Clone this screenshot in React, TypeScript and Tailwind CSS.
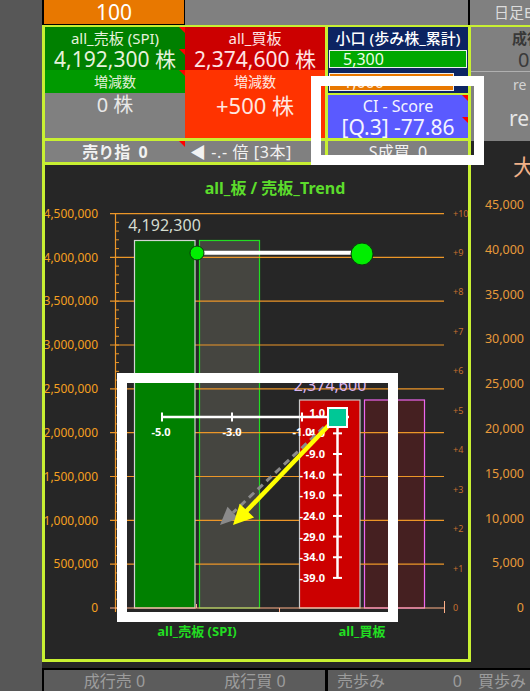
import React from "react";

const leftLabels = ["0", "500,000", "1,000,000", "1,500,000", "2,000,000", "2,500,000", "3,000,000", "3,500,000", "4,000,000", "4,500,000"];
const rightLabels = ["0", "+1", "+2", "+3", "+4", "+5", "+6", "+7", "+8", "+9", "+10"];
const vLabels = ["1.0", "-4.0", "-9.0", "-14.0", "-19.0", "-24.0", "-29.0", "-34.0", "-39.0"];
const sideLabels = ["0", "5,000", "10,000", "15,000", "20,000", "25,000", "30,000", "35,000", "40,000", "45,000"];

function Chart() {
  const minor = Array.from({ length: 46 }, (_, j) => 608 - j * 8.766);
  return (
    <svg width="423" height="494" viewBox="45 165 423 494" className="block">
      <text x="275" y="194" textAnchor="middle" fontSize="16" fontWeight="700" fill="#5cdc2c">
        all_板 / 売板_Trend
      </text>
      <rect x="199.5" y="240.5" width="60" height="367.5" fill="#454540" stroke="#22dd22" strokeWidth="1.2" />
      <rect x="364.5" y="400" width="60" height="208" fill="#452021" stroke="#ee66ee" strokeWidth="1.2" />
      {leftLabels.map((l, i) => {
        const y = 608 - i * 43.83;
        return (
          <g key={l}>
            {i > 0 && <line x1="110" y1={y} x2="444" y2={y} stroke="#ec9628" strokeWidth="1.2" />}
            <text x="98" y={y + 4.2} textAnchor="end" fontSize="12" fill="#f5a020">
              {l}
            </text>
          </g>
        );
      })}
      {minor.map((y, j) => (
        <line key={j} x1="115" y1={y} x2="119" y2={y} stroke="#ec9628" strokeWidth="1" />
      ))}
      <line x1="115.5" y1="213" x2="115.5" y2="612" stroke="#ec9628" strokeWidth="1.2" />
      {rightLabels.map((l, k) => (
        <text key={l} x="453" y={608 - k * 39.45 + 3} fontSize="9" fill="#c8702f">
          {l}
        </text>
      ))}
      <rect x="134.5" y="240.5" width="60.5" height="367.5" fill="#008000" stroke="#d4d4d4" strokeWidth="1.2" />
      <rect x="299.5" y="400" width="60.5" height="208" fill="#cc0000" stroke="#c8c8c8" strokeWidth="1.2" />
      <line x1="110" y1="608" x2="445" y2="608" stroke="#ffb088" strokeWidth="1.2" />
      <line x1="444.5" y1="601" x2="444.5" y2="613" stroke="#ffb088" strokeWidth="1" />
      <line x1="279.5" y1="608" x2="279.5" y2="613" stroke="#ffb088" strokeWidth="1" />
      <line x1="196.5" y1="604" x2="196.5" y2="608" stroke="#ffb088" strokeWidth="1" />
      <text x="164.5" y="231" textAnchor="middle" fontSize="16" fill="#d4dcd0">4,192,300</text>
      <text x="330" y="391" textAnchor="middle" fontSize="16" fill="#dab4f0">2,374,600</text>
      <text x="197" y="636" textAnchor="middle" fontSize="13" fontWeight="700" fill="#22dd22">all_売板 (SPI)</text>
      <text x="362" y="636" textAnchor="middle" fontSize="13" fontWeight="700" fill="#22dd22">all_買板</text>
      <line x1="197" y1="252.7" x2="362" y2="252.7" stroke="#ffffff" strokeWidth="4" />
      <circle cx="197" cy="253" r="7" fill="#00ee00" stroke="#0a3a0a" strokeWidth="1" />
      <circle cx="362" cy="254" r="11" fill="#00ee00" stroke="#0a3a0a" strokeWidth="1" />
      <line x1="162" y1="417" x2="349" y2="417" stroke="#ffffff" strokeWidth="2.5" />
      {[162, 232, 302].map((x) => (
        <line key={x} x1={x} y1="412.5" x2={x} y2="421.5" stroke="#ffffff" strokeWidth="2" />
      ))}
      {[["-5.0", 161], ["-3.0", 232], ["-1.0", 302]].map(([t, x]) => (
        <text key={t as string} x={x as number} y="436" textAnchor="middle" fontSize="11" fontWeight="700" fill="#ffffff">
          {t}
        </text>
      ))}
      <line x1="337.5" y1="417" x2="337.5" y2="578" stroke="#ffffff" strokeWidth="2.5" />
      {vLabels.map((t, i) => {
        const y = 412.7 + i * 20.65;
        return (
          <g key={t}>
            <line x1="333" y1={y} x2="342" y2={y} stroke="#ffffff" strokeWidth="2" />
            <text x="325" y={y + 4} textAnchor="end" fontSize="11" fontWeight="700" fill="#ffffff">
              {t}
            </text>
          </g>
        );
      })}
      <line x1="324" y1="427" x2="233" y2="512.6" stroke="#8a8a8a" strokeWidth="3" strokeDasharray="7 5" />
      <polygon points="220,525 238.5,518.4 227.5,506.8" fill="#8a8a8a" />
      <line x1="330" y1="424" x2="246" y2="511.5" stroke="#ffff00" strokeWidth="4.5" />
      <polygon points="233,525 254.1,517.5 239.7,503.7" fill="#ffff00" />
      <rect x="328" y="408" width="19" height="19" fill="#00c896" stroke="#ffffff" strokeWidth="2" />
    </svg>
  );
}

function SideAxis() {
  return (
    <svg width="59" height="521" viewBox="471 141 59 521" className="block">
      <text x="513" y="175" fontSize="22" fill="#f0b088">大</text>
      {sideLabels.map((l, k) => (
        <text key={l} x="524" y={608 - k * 44.8 + 4.2} textAnchor="end" fontSize="12.5" fill="#e89a3a">
          {l}
        </text>
      ))}
    </svg>
  );
}

export default function App() {
  return (
    <div className="relative w-[530px] h-[691px] overflow-hidden bg-[#575757] font-['Noto_Sans','Noto_Sans_CJK_JP',sans-serif] flex">
      <div className="w-[42px] shrink-0" />
      <div className="flex flex-col w-[488px] shrink-0">
        <div className="h-[25px] flex shrink-0">
          <div className="w-[143px] bg-[#e87800] border-l-2 border-r border-b border-black flex items-center justify-center text-white text-[21px] leading-none">
            100
          </div>
          <div className="w-[283px] bg-[#808080]" />
          <div className="w-[2px] bg-black" />
          <div className="w-[60px] bg-[#808080] flex items-center pl-[24px] text-[15px] leading-none text-[#dcdcdc] whitespace-nowrap overflow-hidden">
            日足E
          </div>
        </div>
        <div className="h-[637px] flex shrink-0">
          <div className="w-[429px] flex flex-col border-l-[3px] border-r-[3px] border-t-2 border-b-[3px] border-[#c8f032]">
            <div className="h-[111px] flex">
              <div className="w-[140px] flex flex-col">
                <div className="h-[43px] bg-[#008000] flex flex-col items-center pt-[1px] text-[#e6f2dc]">
                  <div className="h-[20px] leading-[20px] text-[15px]">all_売板 (SPI)</div>
                  <div className="h-[22px] leading-[22px] text-[21px]">4,192,300 株</div>
                </div>
                <div className="h-[23px] bg-[#009a00] flex items-center justify-center text-[14px] text-[#e0f0d8] leading-none">
                  増減数
                </div>
                <div className="h-[45px] bg-[#808080] flex justify-center">
                  <div className="h-[24px] leading-[24px] text-[20px] text-[#e8e8e8]">0 株</div>
                </div>
              </div>
              <div className="w-[140px] flex flex-col">
                <div className="h-[43px] bg-[#cc0000] flex flex-col items-center pt-[1px] text-[#ffe4e4]">
                  <div className="h-[20px] leading-[20px] text-[15px]">all_買板</div>
                  <div className="h-[22px] leading-[22px] text-[21px]">2,374,600 株</div>
                </div>
                <div className="h-[68px] bg-[#ff3300] flex flex-col items-center text-[#ffe8e0]">
                  <div className="h-[23px] leading-[23px] text-[14px]">増減数</div>
                  <div className="h-[24px] leading-[24px] text-[22px]">+500 株</div>
                </div>
              </div>
              <div className="w-[3px] bg-[#c8f032]" />
              <div className="w-[140px] flex flex-col">
                <div className="h-[66px] bg-[#0c2462] flex flex-col">
                  <div className="h-[22px] leading-[22px] text-center text-[15px] font-medium text-white whitespace-nowrap">
                    小口 (歩み株_累計)
                  </div>
                  <div className="mt-[1px] ml-[1px] w-[138px] h-[18px] bg-[#00a800] border border-[#eeeeee] pl-[13px] text-[16px] leading-[16px] text-[#eaffe6]">
                    5,300
                  </div>
                  <div className="mt-[5px] ml-[1px] w-[125px] h-[18px] bg-[#e87800] border border-[#eeeeee] pl-[13px] text-[16px] leading-[16px] text-[#fff0e0]">
                    1,000
                  </div>
                </div>
                <div className="h-[2px] bg-[#c8f032]" />
                <div className="h-[43px] bg-[#5a5aff] flex flex-col items-center text-[#f4f4ff]">
                  <div className="h-[22px] leading-[22px] text-[16px]">CI - Score</div>
                  <div className="h-[21px] leading-[21px] text-[21px]">[Q.3] -77.86</div>
                </div>
              </div>
            </div>
            <div className="h-[3px] bg-[#c8f032]" />
            <div className="h-[21px] flex bg-[#808080] text-[16px] leading-none text-[#f2f2f2] whitespace-nowrap">
              <div className="w-[140px] flex items-center justify-center font-bold">売り指&nbsp;&nbsp;0</div>
              <div className="w-[140px] flex items-center pl-[5px] tracking-[0.6px]">◀&nbsp;-.-&nbsp;倍&nbsp;[3本]</div>
              <div className="w-[3px] bg-[#c8f032]" />
              <div className="w-[140px] flex items-center justify-center">S成買&nbsp;&nbsp;0</div>
            </div>
            <div className="h-[3px] bg-[#c8f032]" />
            <div className="flex-1 bg-[#262626]">
              <Chart />
            </div>
          </div>
          <div className="w-[59px] flex flex-col border-t-2 border-[#c8f032]">
            <div className="h-[114px] bg-[#808080] flex flex-col whitespace-nowrap overflow-hidden">
              <div className="h-[45px] border-b border-[#b0b0b0] flex flex-col">
                <div className="h-[22px] leading-[22px] pl-[41px] text-[15px] font-bold text-[#383838]">成行買</div>
                <div className="h-[22px] leading-[22px] pl-[47px] text-[20px] text-[#3a3a3a]">0</div>
              </div>
              <div className="h-[26px] leading-[26px] pl-[42px] text-[14px] text-[#d4d4d4]">re</div>
              <div className="h-[40px] leading-[40px] pl-[38px] text-[21px] text-[#e6e6e6]">reS</div>
            </div>
            <div className="flex-1 bg-[#262626]">
              <SideAxis />
            </div>
          </div>
        </div>
        <div className="h-[29px] flex flex-col shrink-0">
          <div className="h-[6px] bg-[#262626]" />
          <div className="h-[2px] bg-black" />
          <div className="h-[21px] flex bg-[#5c5c5c] text-[16px] leading-none text-[#9c9c9c] whitespace-nowrap">
            <div className="w-[2px] bg-black" />
            <div className="w-[141px] flex items-center justify-center">成行売 0</div>
            <div className="w-[140px] flex items-center justify-center">成行買 0</div>
            <div className="w-[3px] bg-black" />
            <div className="w-[142px] flex items-center justify-between pl-[9px] pr-[8px]">
              <span>売歩み</span>
              <span>0</span>
            </div>
            <div className="flex-1 flex items-center pl-[8px] overflow-hidden">買歩み</div>
          </div>
        </div>
      </div>

      <div className="absolute left-[179px] top-[27px] w-0 h-0 border-t-[6px] border-t-[#ff0000] border-l-[6px] border-l-transparent" />
      <div className="absolute left-[179px] top-[49px] w-0 h-0 border-t-[6px] border-t-[#ff0000] border-l-[6px] border-l-transparent" />
      <div className="absolute left-[179px] top-[70px] w-0 h-0 border-t-[6px] border-t-[#ff0000] border-l-[6px] border-l-transparent" />
      <div className="absolute left-[179px] top-[141px] w-0 h-0 border-t-[6px] border-t-[#ff0000] border-l-[6px] border-l-transparent" />
      <div className="absolute left-[462px] top-[95px] w-0 h-0 border-t-[6px] border-t-[#ff0000] border-l-[6px] border-l-transparent" />
      <div className="absolute left-[462px] top-[117px] w-0 h-0 border-t-[6px] border-t-[#ff0000] border-l-[6px] border-l-transparent" />

      <div className="absolute left-[311px] top-[76px] w-[173px] h-[89px] border-[10px] border-white" />
      <div className="absolute left-[117px] top-[373px] w-[281px] h-[249px] border-[10px] border-white" />
    </div>
  );
}
